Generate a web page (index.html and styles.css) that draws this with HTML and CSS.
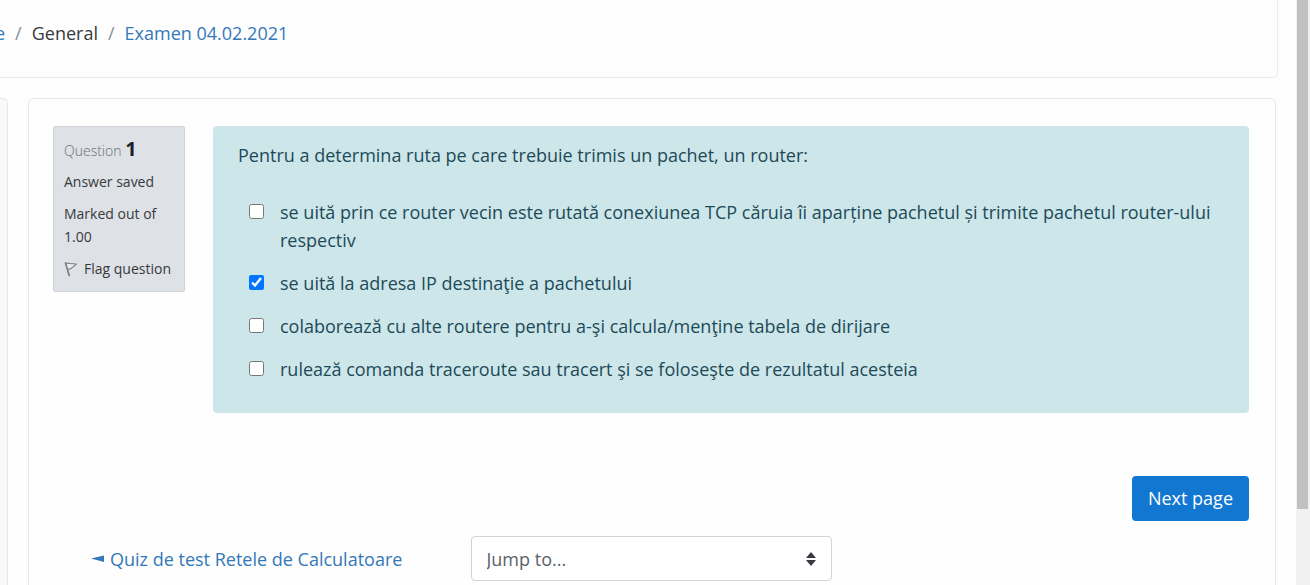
FILE: index.html
```html
<!DOCTYPE html>
<html lang="en">
<head>
<meta charset="utf-8">
<meta name="viewport" content="width=device-width, initial-scale=1">
<title>Examen 04.02.2021</title>
<link rel="stylesheet" href="styles.css">
</head>
<body>
<div class="page">
  <header class="page-header">
    <nav aria-label="Breadcrumb">
      <ol class="breadcrumb">
        <li><a href="#">e</a></li>
        <li>General</li>
        <li><a href="#">Examen 04.02.2021</a></li>
      </ol>
    </nav>
  </header>
  <div class="columns">
    <aside class="side-block"></aside>
    <main class="card">
      <form>
        <div class="question">
          <section class="info">
            <h3 class="info-title">Question <span class="info-number">1</span></h3>
            <p class="info-line">Answer saved</p>
            <p class="info-line">Marked out of 1.00</p>
            <a class="flag" href="#">
              <svg class="flag-icon" viewBox="0 0 14 16" width="14" height="16" aria-hidden="true">
                <path d="M1.5 2.2 12.5 3 6 8.2 3.6 8" fill="#e9ebee" stroke="#85898d" stroke-width="1.2" stroke-linejoin="round"/>
                <path d="M1.5 2 5.2 14.5" fill="none" stroke="#777b7f" stroke-width="1.6" stroke-linecap="round"/>
              </svg>
              <span>Flag question</span>
            </a>
          </section>
          <fieldset class="formulation">
            <legend class="prompt">Pentru a determina ruta pe care trebuie trimis un pachet, un router:</legend>
            <div class="answers">
              <label class="answer"><input class="tick" type="checkbox"><span>se uită prin ce router vecin este rutată conexiunea TCP căruia îi aparține pachetul și trimite pachetul router-ului respectiv</span></label>
              <label class="answer"><input class="tick" type="checkbox" checked><span>se uită la adresa IP destinaţie a pachetului</span></label>
              <label class="answer"><input class="tick" type="checkbox"><span>colaborează cu alte routere pentru a-şi calcula/menţine tabela de dirijare</span></label>
              <label class="answer"><input class="tick" type="checkbox"><span>rulează comanda traceroute sau tracert şi se foloseşte de rezultatul acesteia</span></label>
            </div>
          </fieldset>
        </div>
        <div class="submit-row"><button class="next" type="button">Next page</button></div>
      </form>
      <div class="activity-nav">
        <a class="previous" href="#">
          <svg width="13" height="8" viewBox="0 0 13 8" aria-hidden="true"><path d="M0 3.5 13 .5V7z" fill="currentColor"/></svg>
          <span>Quiz de test Retele de Calculatoare</span>
        </a>
        <div class="jump">
          <select class="jump-select" aria-label="Jump to..."><option>Jump to...</option></select>
          <svg class="jump-arrows" width="10" height="14" viewBox="0 0 10 14" aria-hidden="true"><path d="M5 0 10 6H0zM0 8h10l-5 6z" fill="#343a40"/></svg>
        </div>
      </div>
    </main>
  </div>
</div>
<div class="scroll-track" aria-hidden="true"><div class="scroll-thumb"></div></div>
</body>
</html>
```
FILE: styles.css
```css
* { box-sizing: border-box; }

body {
  display: flex;
  height: 100vh;
  margin: 0;
  overflow: hidden;
  background: #fefefe;
  color: #373a3c;
  font: 18px/28px "Open Sans", "Noto Sans", sans-serif;
}

a { color: #3378b9; text-decoration: none; }

.page { flex: 1; min-width: 0; }

.page-header {
  margin-right: 18px;
  padding: 19px 0 30px;
  border: solid #e9eaeb;
  border-width: 0 1px 1px 0;
  border-radius: 0 0 5px;
}

.breadcrumb {
  display: flex;
  margin: 0 0 0 -5px;
  padding: 0;
  list-style: none;
}

.breadcrumb li + li::before {
  content: "/";
  padding: 0 10px;
  color: #868e96;
}

.columns {
  display: flex;
  gap: 20px;
  margin: 20px 20px 0 0;
}

.side-block {
  flex: 0 0 8px;
  border: solid #e6e8e9;
  border-width: 1px 1px 0 0;
  border-radius: 0 5px 0 0;
  background: #f8f9fa;
}

.card {
  flex: 1;
  min-width: 0;
  padding: 27px 26px 24px 24px;
  border: 1px solid #e6e8e9;
  border-radius: 5px;
}

.question {
  display: flex;
  align-items: flex-start;
  gap: 28px;
}

.info {
  flex: 0 0 132px;
  padding: 10px 8px 11px 10px;
  border: 1px solid #cfd3d8;
  border-radius: 2px;
  background: #dee1e6;
  font-size: 14px;
  line-height: 23px;
}

.info-title {
  margin: 0 0 8px;
  color: #6a7076;
  font-size: 14px;
  font-weight: 300;
  line-height: 23px;
}

.info-number { color: #1d2125; font-size: 20px; font-weight: 700; }

.info-line { margin: 0 0 9px; }

.flag {
  display: flex;
  align-items: center;
  gap: 6px;
  color: #373a3c;
  white-space: nowrap;
}

.flag-icon { flex: none; }

.formulation {
  flex: 1;
  min-width: 0;
  margin: 0;
  padding: 15px 25px 30px;
  border: 0;
  border-radius: 4px;
  background: #cde6e9;
  color: #1d4a58;
}

.prompt { float: left; width: 100%; padding: 0; }

.answers {
  display: flex;
  flex-direction: column;
  gap: 15px;
  clear: both;
  padding: 29px 0 0 11px;
}

.answer { display: flex; align-items: flex-start; gap: 16px; }

.tick {
  flex: none;
  width: 15px;
  height: 15px;
  margin: 6px 0 0;
}

.submit-row {
  display: flex;
  justify-content: flex-end;
  margin-top: 63px;
}

.next {
  padding: 8px 16px 9px;
  border: 0;
  border-radius: 4px;
  background: #1177d1;
  color: #fff;
  font: inherit;
}

.activity-nav {
  display: grid;
  grid-template-columns: 1fr 361px 1fr;
  align-items: center;
  margin-top: 15px;
}

.previous {
  display: flex;
  align-items: center;
  gap: 6px;
  padding-left: 38px;
  white-space: nowrap;
}

.jump { position: relative; }

.jump-select {
  display: block;
  width: 100%;
  height: 45px;
  padding: 0 32px 0 15px;
  border: 1px solid #ced4da;
  border-radius: 4px;
  appearance: none;
  background: #fff;
  color: #5b6269;
  font: inherit;
}

.jump-arrows {
  position: absolute;
  top: 16px;
  right: 16px;
  pointer-events: none;
}

.scroll-track {
  flex: 0 0 14px;
  padding: 0 2px 0 1px;
  background: #f1f1f1;
}

.scroll-thumb { height: 87%; background: #c1c1c1; }
```
